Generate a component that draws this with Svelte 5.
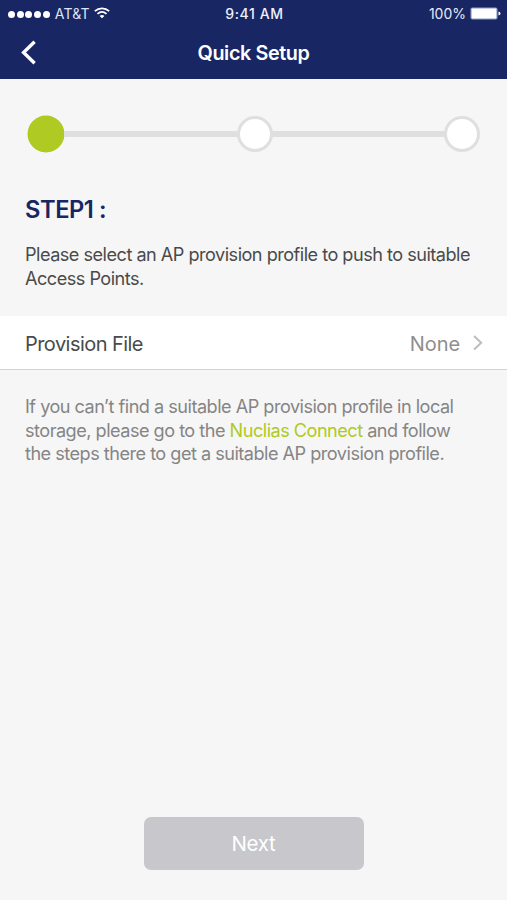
<script lang="ts">
	const signal = [1, 2, 3, 4, 5];
	const steps = [1, 2, 3];

	let current = $state(1);
	let profile = $state('None');
</script>

<div class="screen">
	<header>
		<div class="status-bar">
			<div class="carrier">
				<div class="signal">
					{#each signal as bar (bar)}
						<span class="signal-dot"></span>
					{/each}
				</div>
				<span class="carrier-name">AT&amp;T</span>
				<svg class="wifi" width="16" height="12" viewBox="0 0 16 12" aria-hidden="true">
					<path d="M.8 4.2C5 .3 11 .3 15.2 4.2" />
					<path d="M3.5 6.9C6.2 4.5 9.8 4.5 12.5 6.9" />
					<path class="wifi-base" d="M5.6 9C7 7.8 9 7.8 10.4 9L8 11.3Z" />
				</svg>
			</div>
			<span class="time">9:41 AM</span>
			<div class="power">
				<span class="percent">100%</span>
				<svg width="31" height="13" viewBox="0 0 31 13" aria-hidden="true">
					<rect x=".5" y=".5" width="27" height="12" rx="1.8" fill="#8f9bc9" />
					<rect x="1.6" y="1.6" width="24.8" height="9.8" rx=".8" fill="#fff" />
					<path d="M28.5 4.5Q30.5 5 30.5 6.5T28.5 8.5Z" fill="#fff" />
				</svg>
			</div>
		</div>

		<nav>
			<button class="back" aria-label="Back">
				<svg width="18" height="28" viewBox="0 0 18 28" aria-hidden="true">
					<polyline points="14.6,2.8 3.6,13.5 14.6,24.2" />
				</svg>
			</button>
			<h1>Quick Setup</h1>
		</nav>
	</header>

	<main>
		<div class="stepper">
			{#each steps as step (step)}
				{#if step > 1}
					<span class="line"></span>
				{/if}
				<span class="step" class:active={step === current}></span>
			{/each}
		</div>

		<h2>STEP{current} :</h2>
		<p class="intro">Please select an AP provision profile to push to suitable<br />Access Points.</p>

		<button class="file-row">
			<span class="file-label">Provision File</span>
			<span class="file-value">{profile}</span>
			<svg width="12" height="18" viewBox="0 0 12 18" aria-hidden="true">
				<polyline points="2,2 9.2,8.7 2,15.4" />
			</svg>
		</button>

		<p class="hint">
			If you can’t find a suitable AP provision profile in local<br />
			storage, please go to the <a href="#connect">Nuclias Connect</a> and follow<br />
			the steps there to get a suitable AP provision profile.
		</p>
	</main>

	<footer>
		<button class="next">Next</button>
	</footer>
</div>

<style>
	:global(body) {
		margin: 0;
	}

	.screen {
		display: flex;
		flex-direction: column;
		width: 507px;
		height: 900px;
		overflow: hidden;
		background: #f6f6f6;
		font-family: Inter, 'Liberation Sans', sans-serif;
		color: #4a4a4a;
	}

	button {
		padding: 0;
		border: 0;
		background: none;
		font: inherit;
		color: inherit;
	}

	svg {
		display: block;
		flex-shrink: 0;
	}

	header {
		height: 79px;
		flex-shrink: 0;
		background: #182663;
		color: #fff;
	}

	.status-bar {
		display: grid;
		grid-template-columns: 1fr auto 1fr;
		align-items: center;
		box-sizing: border-box;
		height: 27px;
		padding: 0 6px 0 8px;
		font-size: 14px;
		line-height: 26px;
	}

	.carrier,
	.power,
	.signal {
		display: flex;
		align-items: center;
	}

	.carrier-name {
		margin: 1px 4px 0 5px;
		letter-spacing: 0.2px;
		color: #dfe4f5;
	}

	.signal {
		gap: 1.7px;
		padding-top: 2px;
	}

	.signal-dot {
		width: 7px;
		height: 7px;
		border-radius: 50%;
		background: #fff;
	}

	.wifi path {
		fill: none;
		stroke: #fff;
		stroke-width: 1.8;
	}

	.wifi {
		margin-bottom: 1px;
	}

	.wifi .wifi-base {
		fill: #fff;
		stroke: none;
	}

	.time {
		font-weight: 500;
		letter-spacing: 0.6px;
		color: #eef0fa;
	}

	.power {
		justify-content: flex-end;
		gap: 4px;
	}

	.percent {
		padding-top: 1px;
		color: #e6eaf7;
	}

	nav {
		display: grid;
		grid-template-columns: 60px 1fr 60px;
		align-items: center;
		height: 51px;
	}

	.back {
		padding-left: 20px;
	}

	.back polyline {
		fill: none;
		stroke: #fff;
		stroke-width: 3.4;
	}

	h1 {
		margin: 0;
		font-size: 19.8px;
		font-weight: 600;
		letter-spacing: -0.4px;
		text-align: center;
	}

	.stepper {
		display: flex;
		align-items: center;
		padding: 37px 27px 0 28px;
	}

	.step {
		box-sizing: border-box;
		width: 36px;
		height: 36px;
		flex-shrink: 0;
		border: 3.5px solid #dfdfdf;
		border-radius: 50%;
		background: #fff;
	}

	.step.active {
		border-color: #afca22;
		background: #afca22;
		box-shadow: 0 0 0 0.5px #afca22;
	}

	.line {
		flex: 1;
		height: 6px;
		margin-right: -1px;
		background: #dfdfdf;
	}

	.step:not(.active) + .line {
		margin-left: -1px;
	}

	h2 {
		margin: 43px 0 0 25px;
		font-size: 23.7px;
		font-weight: 600;
		line-height: 30px;
		letter-spacing: -0.45px;
		color: #182663;
	}

	p {
		margin: 0;
		padding: 0 25px;
		font-size: 18.1px;
		line-height: 23.6px;
		white-space: nowrap;
	}

	.intro {
		height: 48px;
		margin-top: 18px;
		letter-spacing: -0.5px;
	}

	.file-row {
		display: flex;
		align-items: center;
		box-sizing: border-box;
		width: 100%;
		height: 54px;
		margin-top: 25px;
		padding: 0 23px 0 25px;
		border-bottom: 1px solid #d2d2d4;
		background: #fff;
		font-size: 20px;
	}

	.file-label {
		flex: 1;
		padding-top: 2px;
		text-align: left;
		letter-spacing: -0.55px;
	}

	.file-value {
		padding-top: 2px;
		margin-right: 12px;
		letter-spacing: -0.1px;
		color: #8e8e8e;
	}

	.file-row polyline {
		fill: none;
		stroke: #bdbdbf;
		stroke-width: 2;
	}

	.hint {
		margin-top: 25px;
		letter-spacing: -0.5px;
		color: #858585;
	}

	a {
		color: #afca22;
		text-decoration: none;
	}

	footer {
		display: flex;
		justify-content: center;
		margin-top: auto;
		padding-bottom: 30px;
	}

	.next {
		width: 220px;
		height: 53px;
		border-radius: 7px;
		background: #c7c7cc;
		font-size: 20.5px;
		letter-spacing: -0.3px;
		color: #fff;
	}
</style>
